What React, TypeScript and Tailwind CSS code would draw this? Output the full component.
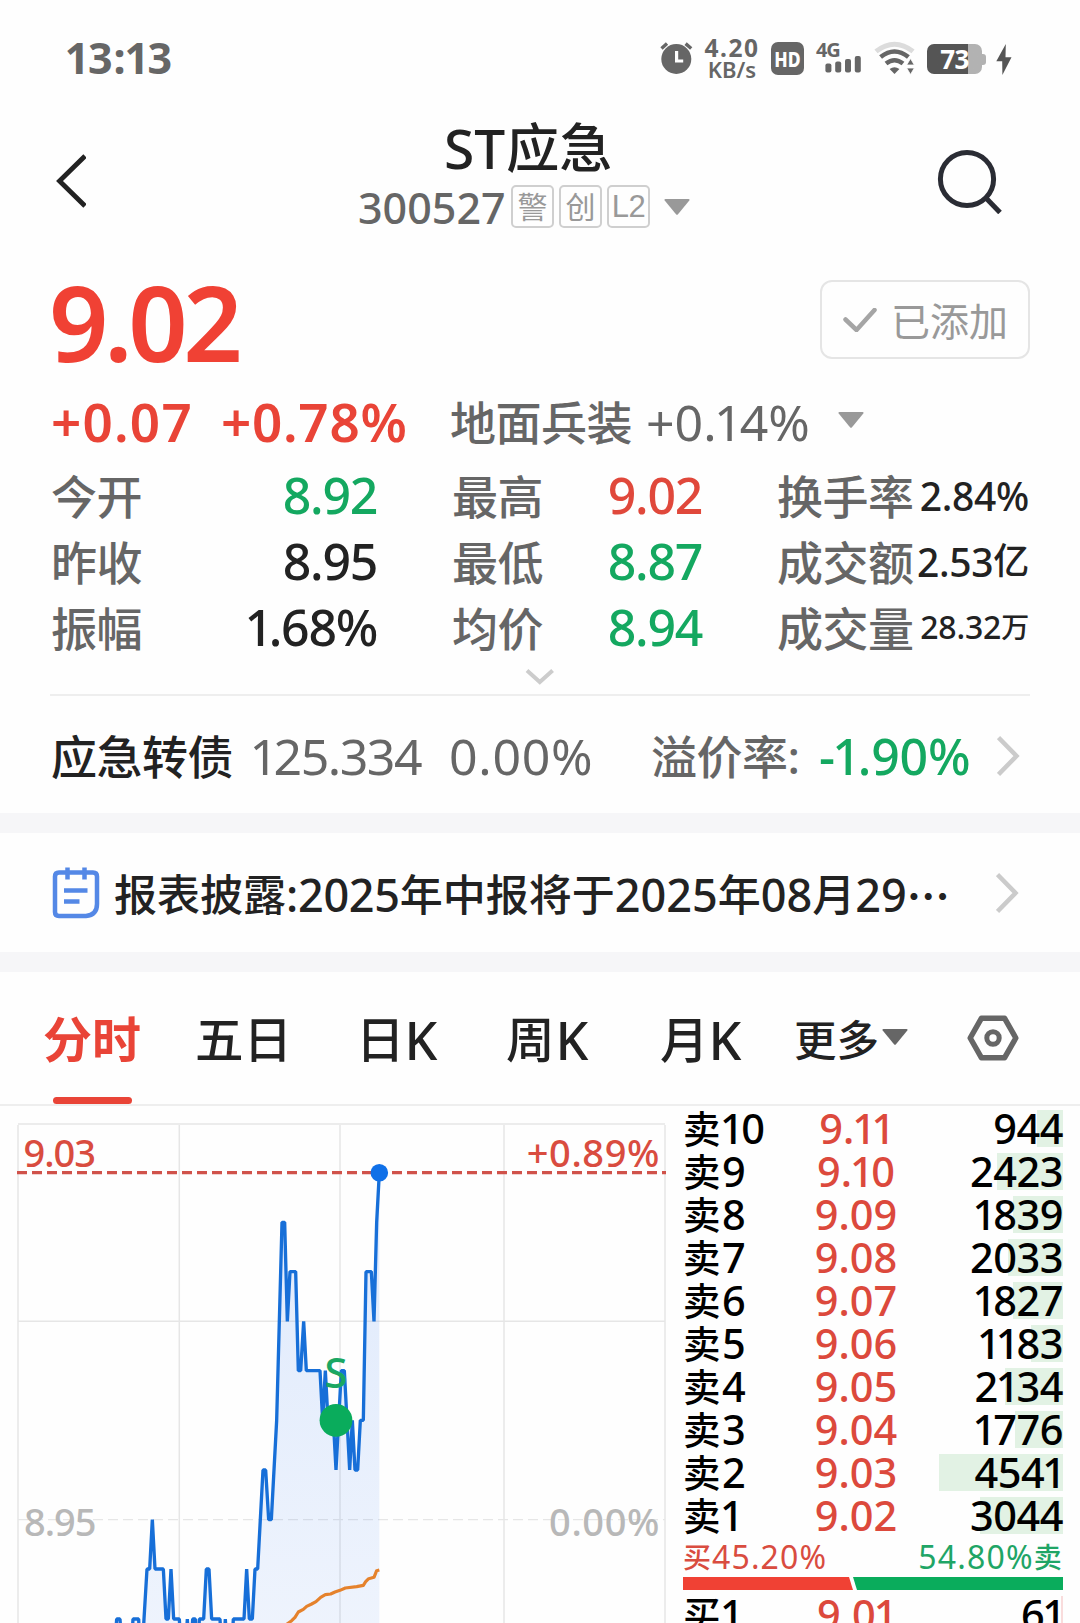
import React from "react";

/** Numeric text whose "1" glyphs are set tighter than the other figures. */
function Num({ children, className = "" }: { children: string; className?: string }) {
  return (
    <span className={`whitespace-pre ${className}`}>
      {children.split(/(1)/).map((part, i) =>
        part === "1" ? (
          <span key={i} className="-ml-[0.05em] -mr-[0.06em]">
            1
          </span>
        ) : (
          part
        ),
      )}
    </span>
  );
}

function Caret({ className = "" }: { className?: string }) {
  return (
    <svg viewBox="0 0 26 16" className={`h-4 w-[26px] shrink-0 ${className}`} fill="currentColor">
      <path d="M1.5 0h23q1.6 .2 .8 1.6L14 15.2q-1 1-2 0L.7 1.6Q-.1 .2 1.5 0z" />
    </svg>
  );
}

function Chevron() {
  return (
    <svg viewBox="0 0 24 42" className="h-[42px] w-6 shrink-0" fill="none" stroke="#cbcbcb" strokeWidth="4.500">
      <path d="M1.500 2.500 19.500 21 1.500 39.500" />
    </svg>
  );
}

function Badge({ children, className = "" }: { children: string; className?: string }) {
  return (
    <span
      className={`flex h-[43px] w-[43px] shrink-0 items-center justify-center rounded-[5px] border-2 border-[#cfcfcf] leading-none text-[#999] ${className}`}
    >
      {children}
    </span>
  );
}

function StatusBar() {
  return (
    <div className="flex h-[116px] items-center text-[#666]">
      <Num className="ml-[67px] w-[591px] -mt-[2px] text-[43px] leading-none font-bold tracking-[1px]">13:13</Num>
      <svg viewBox="0 0 36 36" className="h-9 w-9 shrink-0">
        <circle cx="18.3" cy="19" r="15" fill="#666" />
        <path d="M3.5 8.5 9 3.6M33.2 8.5 27.6 3.6" stroke="#666" strokeWidth="3.4" />
        <path d="M18.6 11v10h6.6" stroke="#fff" strokeWidth="3.2" fill="none" />
      </svg>
      <div className="ml-[9px] flex w-[58px] flex-col items-center font-bold">
        <span className="text-[24.500px] leading-[21px] tracking-[1.5px]">4.20</span>
        <span className="text-[22px] leading-[22px] font-semibold">KB/s</span>
      </div>
      <div className="ml-[10px] flex h-[33px] w-[33px] items-center justify-center rounded-[7px] bg-[#666]">
        <span className="scale-x-[0.8] text-[22px] leading-none font-extrabold text-white">HD</span>
      </div>
      <div className="ml-3 flex h-[33px] w-[46px] flex-col">
        <span className="text-[20px] leading-[16px] font-bold tracking-[-1.2px]">4G</span>
        <svg viewBox="0 0 46 17" className="h-[17px] w-[46px] shrink-0 overflow-visible" fill="#666">
          <rect x="9.4" y="5.6" width="6" height="9" rx="2" />
          <rect x="19.2" y="3.6" width="6" height="11" rx="2" />
          <rect x="29" y="1" width="6" height="13.6" rx="2" />
          <rect x="38.8" y="-2" width="6" height="16.6" rx="2" />
        </svg>
      </div>
      <svg viewBox="0 0 42 34" className="ml-[12px] h-[34px] w-[42px] shrink-0" fill="none">
        <path d="M2 10.4Q20.500 -4 39 10.400" stroke="#dcdcdc" strokeWidth="5" />
        <path d="M6.600 16Q20.500 5 34.400 16" stroke="#666" strokeWidth="4.600" />
        <path d="M12 22.500Q20.500 16 29 22.500" stroke="#666" strokeWidth="4.600" />
        <path d="M15.600 28Q20.500 24.500 25.400 28L20.500 33z" fill="#666" />
        <path d="M36.500 17.500 40.300 24h-7.600zM36.500 33.500 40.300 27h-7.600z" fill="#666" stroke="#fff" strokeWidth=".8" />
      </svg>
      <div className="ml-[11px] mt-[2px] flex items-center">
        <div className="flex h-[30px] w-[55px] items-center justify-center rounded-[7px] bg-gradient-to-r from-[#555] from-[74%] to-[#b2b2b2] to-[74%]">
          <span className="text-[26px] leading-none font-bold text-white tracking-[-0.5px]">73</span>
        </div>
        <div className="h-[11px] w-1 rounded-r-[3px] bg-[#b2b2b2]" />
      </div>
      <svg viewBox="0 0 16 31" className="ml-[10px] mt-[2px] h-[31px] w-4 shrink-0" fill="#555">
        <path d="M9.800 0 .300 17.200h5.900L6.400 31 15.500 13.200H9.500z" />
      </svg>
    </div>
  );
}

function Header() {
  return (
    <div className="flex h-[130px] items-center">
      <svg viewBox="0 0 30 56" className="ml-[56px] h-14 w-[30px] shrink-0" fill="none" stroke="#222" strokeWidth="4.800">
        <path d="M29 3 3.500 28 29 53" />
      </svg>
      <div className="ml-[271px] flex h-[130px] w-[350px] flex-col">
        <div className="flex h-[62px] items-center pl-[87px] leading-none font-medium text-[#222]">
          <span className="text-[55px]">ST</span>
          <span className="ml-[1px] text-[53px]">应急</span>
        </div>
        <div className="flex h-[57px] items-center gap-[5px]">
          <span className="mt-[1px] -mr-[1px] ml-[1px] w-[149px] text-[43px] leading-none font-medium text-[#666]">300527</span>
          <Badge className="text-[30px]">警</Badge>
          <Badge className="text-[30px]">创</Badge>
          <Badge className="font-['Liberation_Sans'] text-[31px] tracking-[-0.500px]">L2</Badge>
          <Caret className="ml-[9px] text-[#999]" />
        </div>
      </div>
      <svg viewBox="0 0 66 66" className="ml-[229px] h-[66px] w-[66px] shrink-0" fill="none" stroke="#2a2c34" strokeWidth="5">
        <circle cx="31" cy="31" r="26.600" />
        <path d="M49.500 49.500 64 64.500" />
      </svg>
    </div>
  );
}

type Tone = "up" | "down" | "flat";
const toneClass: Record<Tone, string> = {
  up: "text-[#e0483b]",
  down: "text-[#14a860]",
  flat: "text-[#222]",
};

const quotes: { a: [string, string, Tone]; b: [string, string, Tone]; c: [string, string, string] }[] = [
  { a: ["今开", "8.92", "down"], b: ["最高", "9.02", "up"], c: ["换手率", "2.84%", ""] },
  { a: ["昨收", "8.95", "flat"], b: ["最低", "8.87", "down"], c: ["成交额", "2.53", "亿"] },
  { a: ["振幅", "1.68%", "flat"], b: ["均价", "8.94", "down"], c: ["成交量", "28.32", "万"] },
];

function Quote() {
  return (
    <div className="leading-none">
      <div className="mt-[34px] flex h-[79px] items-center justify-between pr-[50px] pl-[49px]">
        <span className="mt-[5px] text-[104px] font-semibold tracking-[-4.500px] text-[#f04134]">9.02</span>
        <div className="flex h-[79px] w-[210px] items-center rounded-xl border-2 border-[#e5e5e5] pl-[21px] text-[#999]">
          <svg viewBox="0 0 34 24" className="h-6 w-[34px]" fill="none" stroke="#a5a5a5" strokeWidth="4.500" strokeLinecap="round">
            <path d="M2.500 11.500 13.500 22 31.500 2" />
          </svg>
          <span className="ml-[14px] mt-[2px] text-[39px]">已添加</span>
        </div>
      </div>
      <div className="mt-9 flex h-[53px] items-center">
        <span className="ml-[51px] w-[170px] text-[53px] font-semibold tracking-[1.200px] text-[#e94437]">+0.07</span>
        <span className="w-[229px] text-[53px] font-semibold tracking-[0.700px] text-[#e94437]">+0.78%</span>
        <span className="w-[196px] text-[46px] tracking-[-0.500px] font-medium text-[#666]">地面兵装</span>
        <Num className="w-[192px] text-[50px] text-[#666]">+0.14%</Num>
        <Caret className="-mt-[4px] text-[#999]" />
      </div>
      <div className="mt-[14px] flex flex-col">
        {quotes.map(({ a, b, c }) => (
          <div key={a[0]} className="flex h-[66px] items-center">
            <span className="ml-[51px] w-[99px] pt-[1px] text-[46px] tracking-[-0.500px] font-medium text-[#666]">{a[0]}</span>
            <Num className={`w-[227px] text-right text-[50px] font-medium tracking-[-1.300px] ${toneClass[a[2]]}`}>{a[1]}</Num>
            <span className="ml-[75px] w-[100px] pt-[1px] text-[46px] tracking-[-0.500px] font-medium text-[#666]">{b[0]}</span>
            <Num className={`w-[150px] text-right text-[50px] font-medium tracking-[-1.300px] ${toneClass[b[2]]}`}>{b[1]}</Num>
            <span className="ml-[75px] w-[139px] pt-[1px] text-[46px] tracking-[-0.500px] font-medium text-[#666]">{c[0]}</span>
            <span
              className={`flex w-[113px] items-center justify-end font-medium text-[#222] ${
                c[2] === "万" ? "text-[32px] tracking-[-0.200px]" : "text-[39px] tracking-[-0.300px]"
              }`}
            >
              {c[1]}
              {c[2] && <span className={c[2] === "万" ? "text-[28px]" : "text-[36px]"}>{c[2]}</span>}
            </span>
          </div>
        ))}
      </div>
      <div className="mr-[50px] ml-[50px] h-9 border-b-2 border-[#eee]">
        <svg viewBox="0 0 30 18" className="ml-[475px] h-[18px] w-[30px] translate-y-[8px]" fill="none" stroke="#ccc" strokeWidth="4">
          <path d="M2 2.500 14.800 14 27.600 2.500" />
        </svg>
      </div>
      <div className="flex h-[117px] items-center pt-[2px]">
        <span className="ml-[51px] w-[201px] pt-[1px] text-[46px] tracking-[-0.500px] font-medium text-[#222]">应急转债</span>
        <Num className="w-[197px] text-[50px] tracking-[-1.500px] text-[#666]">125.334</Num>
        <span className="w-[202px] text-[50px] tracking-[0.700px] text-[#666]">0.00%</span>
        <span className="w-[168px] pt-[1px] text-[46px] tracking-[-0.500px] font-medium text-[#666]">溢价率:</span>
        <Num className="w-[178px] text-[50px] font-medium tracking-[-0.200px] text-[#14a860]">-1.90%</Num>
        <Chevron />
      </div>
    </div>
  );
}

function News() {
  return (
    <div className="flex h-[119px] items-center leading-none font-medium text-[#222]">
      <svg viewBox="0 0 48 52" className="ml-[52px] h-[52px] w-12 shrink-0" fill="none" stroke="#5488e6" strokeWidth="4.500">
        <path d="M7 5.500H41q4 0 4 4V37q0 11-11 12H7q-4 0-4-4V9.500q0-4 4-4z" />
        <path d="M15.500 .500V12.500M32.500 .500V12.500M12 23.500H35.500M12 34.500H27.500" />
      </svg>
      <div className="ml-[14px] mt-[4px] flex w-[882px] items-center whitespace-nowrap">
        <span className="text-[43px]">报表披露</span>
        <span className="text-[45px] tracking-[-0.300px]">:2025</span>
        <span className="text-[43px]">年中报将于</span>
        <span className="text-[45px]">2025</span>
        <span className="text-[43px]">年</span>
        <span className="text-[45px]">08</span>
        <span className="text-[43px]">月</span>
        <span className="text-[45px]">29</span>
        <span lang="zh-CN" className="font-['Noto_Sans_CJK_SC'] text-[43px] font-bold">…</span>
      </div>
      <Chevron />
    </div>
  );
}

function Tabs() {
  return (
    <div className="flex h-[134px] items-center border-b-2 border-[#eee] pt-[3px] leading-none font-medium text-[#222]">
      <div className="relative ml-[43px] flex h-full w-[152px] items-center text-[49px] font-bold text-[#e94437]">
        分时
        <span className="absolute bottom-0 left-[10px] h-[7px] w-[79px] rounded-full bg-[#e94437]" />
      </div>
      <span className="w-[161px] text-[48.500px]">五日</span>
      <span className="flex w-[150px] items-center text-[48.500px]">
        日<span className="text-[52px]">K</span>
      </span>
      <span className="flex w-[154px] items-center text-[48.500px]">
        周<span className="pl-[1px] text-[52px]">K</span>
      </span>
      <span className="flex w-[134px] items-center text-[48.500px]">
        月<span className="text-[52px]">K</span>
      </span>
      <span className="w-[88px] pt-[1px] text-[42.500px]">更多</span>
      <Caret className="-mt-[5px] text-[#666]" />
      <svg viewBox="0 0 52 46" className="-mt-[4px] ml-[59px] h-[46px] w-[52px] shrink-0" fill="none" stroke="#666" strokeWidth="5.500" strokeLinejoin="round">
        <path d="M14.500 3.200H37.500L48.800 23 37.500 42.800H14.500L3.200 23z" />
        <circle cx="26" cy="23" r="6.200" strokeWidth="5" />
      </svg>
    </div>
  );
}

/** One third of a pixel per unit, origin at the plot's price-line corner. */
const pricePath =
  "M40 1526 50 1377 60 1377 70 1526 90 1526 99 1377 116 1377 122 1526 128 1450 132 1377 141 1227 149 1227 157 1079 165 1227 190 1227 198 1377 205 1377 213 1227 221 1377 238 1377 246 1526 254 1526 262 1377 270 1526 278 1377 286 1377 292 1526 298 1377 311 1377 319 1227 327 1227 335 1377 360 1377 368 1526 376 1377 384 1526 392 1526 400 1377 432 1377 440 1227 448 1377 457 1377 465 1227 473 1227 489 930 497 930 506 1079 514 1079 530 781 546 187 554 187 562 484 570 335 587 335 595 632 602 632 611 484 619 632 660 632 668 781 676 632 684 781 700 781 708 930 724 632 733 632 749 930 757 781 765 930 773 930 781 781 790 781 798 335 814 335 822 484 830 187 838 38";
const averagePath =
  "M556 1396 575 1382 585 1372 595 1356 610 1348 620 1339 635 1332 648 1325 662 1312 676 1304 692 1302 705 1296 720 1291 736 1284 770 1280 790 1276 797 1265 806 1256 822 1252 830 1232 838 1230";

function Chart() {
  return (
    <svg viewBox="0 1106 672 517" className="h-[517px] w-[672px] shrink-0 font-['Noto_Sans']">
      <defs>
        <linearGradient id="area" x1="0" y1="0" x2="0" y2="1">
          <stop offset="0" stopColor="#2f75f0" stopOpacity=".15" />
          <stop offset="1" stopColor="#2f75f0" stopOpacity=".07" />
        </linearGradient>
      </defs>
      <g stroke="#e6e6e6" strokeWidth="1.500" fill="none">
        <path d="M18 1124H665M18 1321.300H665" />
        <path d="M18 1125V1623M179.300 1125V1623M340 1125V1623M504 1125V1623M665 1125V1623" />
        <path d="M18 1519.700H665" strokeDasharray="10 5" strokeWidth="1.300" />
      </g>
      <g transform="translate(100 1160) scale(.33333)" fill="none" strokeLinejoin="bevel">
        <path d={`${pricePath} V1526z`} fill="url(#area)" />
        <path d={pricePath} stroke="#176fd8" strokeWidth="10" />
        <path d={averagePath} stroke="#e5822c" strokeWidth="9.500" strokeLinejoin="round" />
      </g>
      <path d="M17 1172.700H666" stroke="#d0524a" strokeWidth="3.200" strokeDasharray="10 5" />
      <circle cx="379.300" cy="1172.700" r="8.800" fill="#0f70e8" />
      <circle cx="336" cy="1420.300" r="16.400" fill="#0aac5c" />
      <text x="336" y="1387.500" textAnchor="middle" fontSize="42" fill="#1aa763" fontWeight="500">S</text>
      <g fontSize="38" fontWeight="500">
        <text x="23.500" y="1166.500" fill="#d94c3f" letterSpacing="-1">9.03</text>
        <text x="660" y="1166.500" fill="#d94c3f" textAnchor="end" letterSpacing=".6">+0.89%</text>
        <text x="24" y="1535.500" fill="#b8b8b8" letterSpacing="-1">8.95</text>
        <text x="660" y="1535.500" fill="#b8b8b8" textAnchor="end" letterSpacing=".6">0.00%</text>
      </g>
    </svg>
  );
}

const asks: [string, string, number][] = [
  ["10", "9.11", 944],
  ["9", "9.10", 2423],
  ["8", "9.09", 1839],
  ["7", "9.08", 2033],
  ["6", "9.07", 1827],
  ["5", "9.06", 1183],
  ["4", "9.05", 2134],
  ["3", "9.04", 1776],
  ["2", "9.03", 4541],
  ["1", "9.02", 3044],
];

function BookRow({ side, level, price, volume }: { side: string; level: string; price: string; volume: number }) {
  return (
    <div className="relative mb-[6px] flex h-[37px] items-center leading-none font-medium text-black">
      <span
        className={`absolute top-0 right-0 h-full ${side === "卖" ? "bg-[#e2f2e4]" : "bg-[#f9dcdc]"}`}
        style={{ width: Math.max(2, (volume / 4541) * 124) }}
      />
      <span className="relative w-[38px] text-[37.500px]">{side}</span>
      <Num className="relative w-[75px] pl-[1px] text-[41.500px]">{level}</Num>
      <Num className="relative w-[120px] text-center text-[41.500px] text-[#dc493c]">{price}</Num>
      <Num className="relative w-[147px] text-right text-[41.500px] tracking-[-0.500px]">{String(volume)}</Num>
    </div>
  );
}

function OrderBook() {
  return (
    <div className="ml-[11px] w-[380px] shrink-0 pt-1">
      {asks.map(([level, price, volume]) => (
        <BookRow key={level} side="卖" level={level} price={price} volume={volume} />
      ))}
      <div className="flex h-[37px] items-center justify-between pb-[4px] text-[32px] leading-none">
        <span className="flex items-center tracking-[1.100px] text-[#d94c3f]">
          <span className="text-[28px] font-medium">买</span>45.20%
        </span>
        <span className="flex items-center tracking-[1.200px] text-[#1fa566]">
          54.80%<span className="text-[28px] font-medium">卖</span>
        </span>
      </div>
      <div className="mb-[6px] flex h-[13px]">
        <div className="w-[170px] bg-[#f04134] [clip-path:polygon(0_0,166px_0,170px_100%,0_100%)]" />
        <div className="w-[210px] bg-[#0aac5c] [clip-path:polygon(0_0,100%_0,100%_100%,4px_100%)]" />
      </div>
      <BookRow side="买" level="1" price="9.01" volume={61} />
    </div>
  );
}

export default function App() {
  return (
    <div lang="zh-CN" className="h-[1623px] w-[1080px] overflow-hidden bg-[#fefefe] font-['Noto_Sans','Noto_Sans_CJK_SC',sans-serif]">
      <StatusBar />
      <Header />
      <Quote />
      <div className="h-5 bg-[#f6f6f8]" />
      <News />
      <div className="h-5 bg-[#f6f6f8]" />
      <Tabs />
      <div className="flex h-[517px]">
        <Chart />
        <OrderBook />
      </div>
    </div>
  );
}
